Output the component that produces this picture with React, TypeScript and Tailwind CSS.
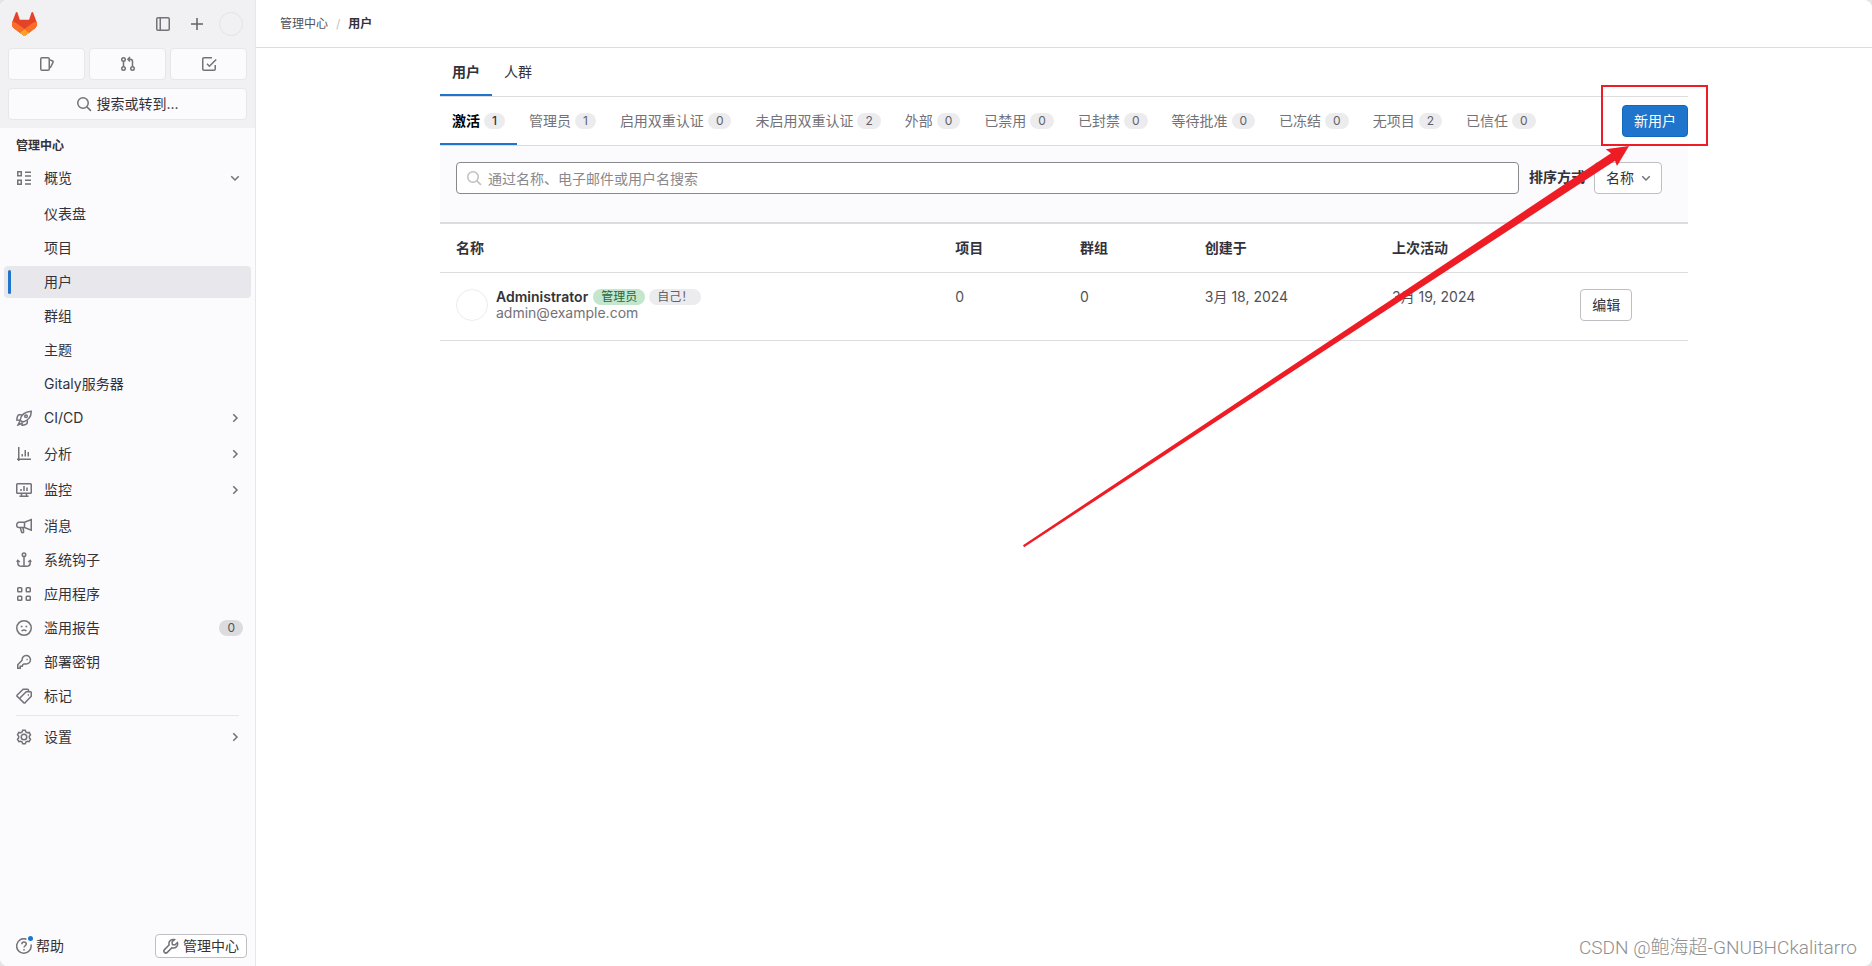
import type { ReactNode } from "react";

const paths: Record<string, ReactNode> = {
  sidebar: <><rect x="1.75" y="1.75" width="12.5" height="12.5" rx="1.25" /><path d="M5.25 2v12" /></>,
  plus: <path d="M8 2v12M2 8h12" />,
  issues: <><rect x="1.75" y="1.75" width="8.5" height="12.5" rx="1.25" /><path d="m11 3.9 2.6 1.1c.5.2.7.7.5 1.2L11.2 12" /></>,
  merge: (
    <>
      <circle cx="3.5" cy="3.5" r="1.75" /><circle cx="3.5" cy="12.5" r="1.75" /><circle cx="12.5" cy="12.5" r="1.75" />
      <path d="M3.5 5.25v5.5M12.5 10.75V5.5c0-1.4-.9-2.25-2.25-2.25H8M10 1 7.9 3.25 10 5.5" />
    </>
  ),
  todo: <><path d="M11 1.75H3c-.7 0-1.25.55-1.25 1.25v10c0 .7.55 1.25 1.25 1.25h10c.7 0 1.25-.55 1.25-1.25V9" /><path d="m6 7.8 2.4 2.4 6.8-6.7" /></>,
  search: <><circle cx="7" cy="7" r="5.25" /><path d="m10.9 10.9 4 4" /></>,
  overview: <><rect x="1.75" y="1.75" width="3.5" height="4" /><rect x="1.75" y="10.25" width="3.5" height="4" /><path d="M9 2.25h6M9 6h6M9 10.25h6M9 14h6" /></>,
  rocket: (
    <>
      <path d="M5 10.8 4.2 10c.6-3.9 3.6-8.1 11-8.7.3 5.4-3.6 9.9-8.3 10.700L5 10.8Z" />
      <path d="M5.8 4.8H3.5C2 4.8 1 7.5.8 10l3.400.2M11.300 10.300v2.200c0 1.600-2.800 2.600-5.200 2.800L6 12.300M4 11l-2 4 3.500-1.500" />
      <circle cx="10" cy="6.2" r="1.3" />
    </>
  ),
  chart: <path d="M2.75 1v14M1 13.25h14M6.250 10.500V8M9.250 10.500V4M12.250 10.500V6" />,
  monitor: <><rect x=".75" y="1.75" width="14.5" height="9.5" rx=".75" /><path d="M5 9V7M8 9V4M11 9V5.500M5.500 11.500v2.500M10.500 11.500v2.500M3.500 14.250h9" /></>,
  bullhorn: (
    <>
      <path d="m8.500 4.200 6.750-2.700v10.700L8.500 9.500H3A2.250 2.250 0 0 1 .75 7.250V6.500A2.250 2.250 0 0 1 3 4.250h5.500v5.250" />
      <path d="m4.250 9.500 1.200 4.300c.2.700.9 1 1.500.8s.9-.8.700-1.400L6.900 9.700" />
    </>
  ),
  anchor: <><circle cx="8" cy="2.75" r="1.75" /><path d="M8 4.500v9.700M1.750 8.500v1.900C1.750 12.700 3.400 14.250 5.500 14.250h5c2.100 0 3.750-1.550 3.750-3.850V8.500M.8 10l1-1.600L3.800 10M12.200 10l2-1.600 1 1.600" /></>,
  apps: <><rect x="1.75" y="1.75" width="4" height="4" rx=".75" /><rect x="10.25" y="1.75" width="4" height="4" rx=".75" /><rect x="1.75" y="10.25" width="4" height="4" rx=".75" /><rect x="10.25" y="10.25" width="4" height="4" rx=".75" /></>,
  sad: <><circle cx="8" cy="8" r="7.25" /><path d="M5.600 11.200c1-1.700 3.800-1.700 4.800 0M4.750 6.500h1.750M9.500 6.500h1.750" /></>,
  key: <><path d="M9.700 9.900a4.200 4.200 0 1 0-3.600-3.600L1.750 10.700v3.550h2.500v-2h2l.5-1.500 1.200-.850Z" /><path d="M10.500 5.400h1.200" /></>,
  labels: (
    <>
      <path d="M10.200 3.750h4.300c.4 0 .75.3.75.75v3.800l-6 6.300c-.5.5-1.100.5-1.600 0L4.200 11.200c-.4-.4-.4-1.100 0-1.500l6-5.950Z" />
      <path d="M12.500 3.700V2.250c0-.6-.4-1-1-1H7.200L1.200 7c-.4.400-.4 1 0 1.400L4 11M11.800 7.100h1.200" />
    </>
  ),
  settings: (
    <>
      <path d="M6.700 1.300h2.600l.6 1.700 1.400.8 1.800-.4 1.400 2.300-1.200 1.500v1.600l1.200 1.500-1.400 2.300-1.800-.4-1.400.8-.6 1.700H6.700L6.100 13l-1.400-.8-1.800.4-1.400-2.300 1.200-1.500V7.200L1.500 5.700l1.400-2.300 1.800.4 1.400-.8.600-1.700Z" />
      <circle cx="8" cy="8" r="2.75" />
    </>
  ),
  help: <><path d="M10.500 1.200A7.250 7.250 0 1 0 15 6.500" /><path d="M5.800 6.300c0-1.400 1-2.200 2.200-2.200s2.250.8 2.250 2c0 1.600-2.250 1.700-2.250 3.400M8 11v1.400" /></>,
  wrench: <path d="M10.300 1.400a4.100 4.100 0 0 0-4.100 5.500L1.500 11.600a1.900 1.900 0 0 0 2.800 2.800L9 9.700a4.100 4.100 0 0 0 5.400-5.200L11.900 7 9.400 6.500 9 4l2.500-2.400c-.4-.1-.8-.2-1.200-.2Z" />,
  down: <path d="m4.250 6.250 3.750 3.750 3.750-3.750" />,
  right: <path d="m6.250 4.250 3.750 3.750-3.750 3.750" />,
};

const Icon = ({ name, className = "size-4 text-[#737278]" }: { name: string; className?: string }) => (
  <svg viewBox="0 0 16 16" fill="none" stroke="currentColor" strokeWidth="1.5" className={`shrink-0 ${className}`} aria-hidden="true">
    {paths[name]}
  </svg>
);

const Logo = () => (
  <svg viewBox="0 0 25 24" className="h-6 w-[25px]" aria-hidden="true">
    <path d="m24.507 9.500-.034-.09L21.082.562a.896.896 0 0 0-1.694.091l-2.290 7.010H7.825L5.535.653a.898.898 0 0 0-1.694-.09L.451 9.411.416 9.500a6.297 6.297 0 0 0 2.090 7.278l.012.010.030.022 5.160 3.867 2.560 1.935 1.554 1.176a1.051 1.051 0 0 0 1.268 0l1.555-1.176 2.560-1.935 5.197-3.890.014-.010A6.297 6.297 0 0 0 24.507 9.500Z" fill="#E24329" />
    <path d="m24.507 9.500-.034-.09a11.440 11.440 0 0 0-4.560 2.051l-7.447 5.632 4.742 3.584 5.197-3.890.014-.010A6.297 6.297 0 0 0 24.507 9.500Z" fill="#FC6D26" />
    <path d="m7.707 20.677 2.560 1.935 1.555 1.176a1.051 1.051 0 0 0 1.268 0l1.555-1.176 2.560-1.935-4.743-3.584-4.755 3.584Z" fill="#FCA326" />
    <path d="M5.010 11.461a11.430 11.430 0 0 0-4.560-2.050L.416 9.500a6.297 6.297 0 0 0 2.090 7.278l.012.010.030.022 5.160 3.867 4.745-3.584-7.444-5.632Z" fill="#FC6D26" />
  </svg>
);

const overviewItems = ["仪表盘", "项目", "用户", "群组", "主题", "Gitaly服务器"];

const navItems = [
  { icon: "rocket", label: "CI/CD", expandable: true },
  { icon: "chart", label: "分析", expandable: true },
  { icon: "monitor", label: "监控", expandable: true },
  { icon: "bullhorn", label: "消息" },
  { icon: "anchor", label: "系统钩子" },
  { icon: "apps", label: "应用程序" },
  { icon: "sad", label: "滥用报告", count: 0 },
  { icon: "key", label: "部署密钥" },
  { icon: "labels", label: "标记" },
];

const filters = [
  { label: "激活", count: 1 },
  { label: "管理员", count: 1 },
  { label: "启用双重认证", count: 0 },
  { label: "未启用双重认证", count: 2 },
  { label: "外部", count: 0 },
  { label: "已禁用", count: 0 },
  { label: "已封禁", count: 0 },
  { label: "等待批准", count: 0 },
  { label: "已冻结", count: 0 },
  { label: "无项目", count: 2 },
  { label: "已信任", count: 0 },
];

const SectionButton = ({ icon, label, open }: { icon: string; label: string; open?: boolean }) => (
  <button className="mx-1 mb-1 flex h-8 items-center gap-3 pr-2 pl-3 text-left">
    <Icon name={icon} />
    <span className="flex-1">{label}</span>
    <Icon name={open ? "down" : "right"} />
  </button>
);

const Sidebar = () => (
  <aside className="flex w-64 shrink-0 flex-col border-r border-[#e7e7ea] bg-[#fbfafd]">
    <div className="flex flex-col gap-2 bg-[#f1f1f4] p-2 pt-3">
      <div className="mb-1 flex items-center px-1">
        <a href="#" aria-label="GitLab"><Logo /></a>
        <div className="ml-auto flex items-center gap-[14px]">
          <button aria-label="侧边栏" className="mr-1"><Icon name="sidebar" /></button>
          <button aria-label="新建"><Icon name="plus" className="size-4 text-[#626168]" /></button>
          <button aria-label="头像" className="size-6 rounded-full border border-[#e3e3e6]" />
        </div>
      </div>
      <div className="grid grid-cols-3 gap-1">
        {["issues", "merge", "todo"].map((name) => (
          <button key={name} aria-label={name} className="flex h-8 items-center justify-center rounded border border-[#e7e7ea] bg-[#fbfafd]">
            <Icon name={name} />
          </button>
        ))}
      </div>
      <button className="flex h-8 items-center justify-center gap-1 rounded border border-[#e7e7ea] bg-[#fbfafd]">
        <Icon name="search" />
        搜索或转到...
      </button>
    </div>

    <nav className="flex flex-col">
      <h2 className="px-4 pt-2 pb-[6px] text-xs leading-5 font-bold">管理中心</h2>
      <SectionButton icon="overview" label="概览" open />
      {overviewItems.map((label) => (
        <a
          key={label}
          href="#"
          className={`mx-1 mb-[2px] flex h-8 items-center rounded px-1 ${label === "用户" ? "bg-[#e8e7ec]" : ""}`}
        >
          <span className={`mr-[33px] h-6 w-[3px] rounded-full ${label === "用户" ? "bg-[#1f75cb]" : ""}`} />
          {label}
        </a>
      ))}
      {navItems.map((item) =>
        item.expandable ? (
          <SectionButton key={item.label} icon={item.icon} label={item.label} />
        ) : (
          <a key={item.label} href="#" className="mx-1 mb-[2px] flex h-8 items-center gap-3 pr-2 pl-3">
            <Icon name={item.icon} />
            <span className="flex-1">{item.label}</span>
            {item.count !== undefined && (
              <span className="rounded-full bg-[#dcdcde] px-2 text-xs leading-4 text-[#535158]">{item.count}</span>
            )}
          </a>
        )
      )}
      <hr className="mx-4 mt-px mb-[5px] border-[#e7e7ea]" />
      <SectionButton icon="settings" label="设置" />
    </nav>

    <div className="mt-auto flex items-center justify-between p-2 pl-4">
      <button className="relative flex items-center gap-1">
        <Icon name="help" />
        <span className="absolute top-0 left-3 size-[5px] rounded-full bg-[#1f75cb]" />
        帮助
      </button>
      <a href="#" className="flex h-6 items-center gap-1 rounded border border-[#bfbfc3] bg-white px-[7px]">
        <Icon name="wrench" />
        管理中心
      </a>
    </div>
  </aside>
);

// Pointer to the "new user" button, drawn over the content
const Callout = () => (
  <svg viewBox="0 0 688 466" className="pointer-events-none absolute top-[37px] -right-[20px] h-[466px] w-[688px]" fill="#ee1c25" aria-hidden="true">
    <rect x="582" y="1" width="105" height="59" fill="none" stroke="#ee1c25" strokeWidth="2" />
    <path d="M3 460.200 591 68.300 585.700 64.300 609 61 597 81 595 75.700 4.100 462.200Z" />
  </svg>
);

const App = () => (
  <div className="bg-[#e4e4e6] font-['Inter','Noto_Sans_CJK_SC',sans-serif] text-sm text-[#333238]">
    <div className="relative flex min-h-screen overflow-hidden rounded-lg bg-white">
      <Sidebar />

      <div className="min-w-0 flex-1">
        <header className="flex h-12 items-center border-b border-[#dcdcde] px-6 text-xs">
          <a href="#" className="text-[#535158]">管理中心</a>
          <span className="mx-2 text-[#bfbfc3]">/</span>
          <a href="#" className="font-semibold">用户</a>
        </header>

        <main className="relative mx-auto max-w-[1248px]">
          <nav className="flex h-[49px] border-b border-[#dcdcde]">
            <a href="#" className="flex items-center px-3 font-semibold shadow-[inset_0_-2px_0_#1f75cb]">用户</a>
            <a href="#" className="flex items-center px-3">人群</a>
          </nav>

          <div className="flex h-[49px] items-center justify-between border-b border-[#dcdcde]">
            <nav className="flex self-stretch">
              {filters.map((f, i) => (
                <a
                  key={f.label}
                  href="#"
                  className={`flex items-center gap-1 px-3 whitespace-nowrap ${i === 0 ? "font-semibold text-black shadow-[inset_0_-2px_0_#1f75cb]" : "text-[#737278]"}`}
                >
                  {f.label}
                  <span className={`rounded-full bg-[#ececef] px-2 text-xs leading-4 ${i === 0 ? "font-medium text-[#333238]" : "text-[#626168]"}`}>
                    {f.count}
                  </span>
                </a>
              ))}
            </nav>
            <a href="#" className="flex h-8 items-center rounded border border-[#1068bf] bg-[#1f75cb] px-[11px] whitespace-nowrap text-white">新用户</a>
          </div>

          <div className="flex h-[76px] items-start bg-[#fbfafd] pt-4 pr-[26px] pl-4">
            <div className="relative flex-1">
              <Icon name="search" className="absolute top-2 left-[10px] size-4 text-[#bfbfc3]" />
              <input
                type="search"
                aria-label="搜索用户"
                placeholder="通过名称、电子邮件或用户名搜索"
                className="block h-8 w-full rounded border border-[#89888d] bg-white pr-3 pl-[31px] placeholder:text-[#89888d]"
              />
            </div>
            <label htmlFor="sort" className="mr-[9px] ml-[10px] leading-[30px] font-semibold">排序方式</label>
            <div className="relative">
              <select id="sort" className="block h-8 w-[68px] appearance-none rounded border border-[#bfbfc3] bg-white pl-[11px]">
                <option>名称</option>
              </select>
              <Icon name="down" className="pointer-events-none absolute top-2 right-2 size-4 text-[#737278]" />
            </div>
          </div>

          <table className="w-full table-fixed border-t-2 border-[#dcdcde] text-left">
            <thead>
              <tr className="h-[49px] border-b border-[#dcdcde]">
                <th className="w-[40%] px-4 font-semibold">名称</th>
                <th className="w-[10%] px-4 font-semibold">项目</th>
                <th className="w-[10%] px-4 font-semibold">群组</th>
                <th className="w-[15%] px-4 font-semibold">创建于</th>
                <th className="w-[15%] px-4 font-semibold">上次活动</th>
                <th className="w-[10%] px-4" aria-label="操作" />
              </tr>
            </thead>
            <tbody>
              <tr className="h-[68px] border-b border-[#dcdcde] align-top leading-4 text-[#535158]">
                <td className="px-4 pt-4">
                  <div className="flex gap-2">
                    <span className="size-8 rounded-full border border-[#ececef]" />
                    <div>
                      <div className="flex items-center gap-1">
                        <a href="#" className="mr-px font-semibold text-[#333238]">Administrator</a>
                        <span className="rounded-full bg-[#c3e6cd] px-2 text-xs leading-4 text-[#24663b]">管理员</span>
                        <span className="rounded-full bg-[#ececef] px-2 text-xs leading-4 text-[#626168]">自己！</span>
                      </div>
                      <a href="#" className="block text-[#737278]">admin@example.com</a>
                    </div>
                  </div>
                </td>
                <td className="px-4 pt-4">0</td>
                <td className="px-4 pt-4">0</td>
                <td className="px-4 pt-4">3月 18, 2024</td>
                <td className="px-4 pt-4">3月 19, 2024</td>
                <td className="pt-4 pl-[17px]">
                  <a href="#" className="inline-flex h-8 items-center rounded border border-[#bfbfc3] bg-white px-[11px] text-[#333238]">编辑</a>
                </td>
              </tr>
            </tbody>
          </table>

          <Callout />
        </main>
      </div>

      <p className="absolute right-[15px] bottom-1 font-['Roboto','Noto_Sans_CJK_SC',sans-serif] text-[19px] leading-7 font-light text-[#8f8f8f]">
        CSDN @鲍海超-GNUBHCkalitarro
      </p>
    </div>
  </div>
);

export default App;
